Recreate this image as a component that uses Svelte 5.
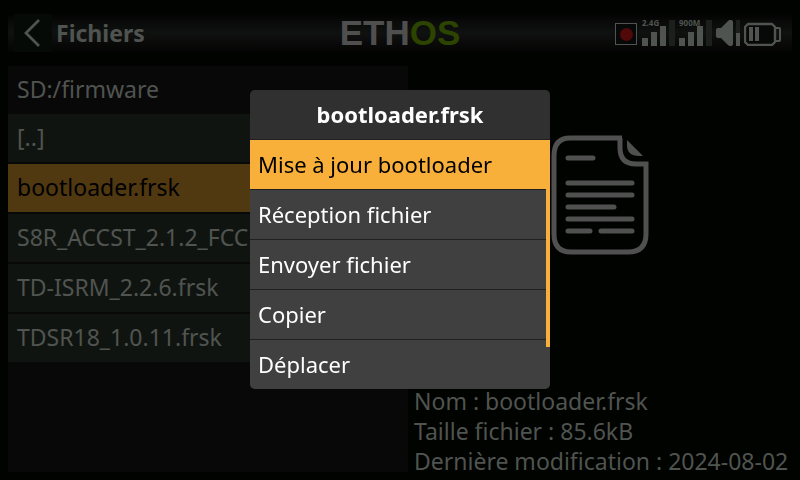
<script>
  const files = ['[..]', 'bootloader.frsk', 'S8R_ACCST_2.1.2_FCC', 'TD-ISRM_2.2.6.frsk', 'TDSR18_1.0.11.frsk'];
  const actions = ['Mise à jour bootloader', 'Réception fichier', 'Envoyer fichier', 'Copier', 'Déplacer'];
  const radios = ['2.4G', '900M'];
  let selectedFile = $state(1);
  let selectedAction = $state(0);
</script>

<div class="page">
  <header>
    <div class="lead">
      <button class="back" aria-label="Retour">
        <svg width="38" height="38" viewBox="0 0 38 38"><path d="M25 6 12 19 25 32" fill="none" stroke="currentColor" stroke-width="2.8" /></svg>
      </button>
      <h1>Fichiers</h1>
    </div>
    <div class="logo">ETH<span>OS</span></div>
    <div class="status">
      <svg width="23" height="26" viewBox="0 0 23 26">
        <rect x="0.5" y="3.5" width="21" height="21" fill="#060907" stroke="#505450" />
        <circle cx="11.5" cy="14.5" r="6.5" fill="#500808" />
      </svg>
      {#each radios as radio}
        <svg class="signal" width="33" height="26" viewBox="0 0 33 26">
          <rect x="0" y="18" width="6" height="8" />
          <rect x="9" y="12" width="6" height="14" />
          <rect x="18" y="6" width="6" height="20" />
          <rect x="27" y="0" width="6" height="26" fill="#1b201d" />
          <text x="0" y="6">{radio}</text>
        </svg>
      {/each}
      <svg width="24" height="26" viewBox="0 0 24 26">
        <path d="M2 8H5V18H2Q0 18 0 16V10Q0 8 2 8ZM5 8 12 1Q13 0 14 0H15Q17 0 17 2V24Q17 26 15 26H14Q13 26 12 25L5 18Z" />
        <rect x="20" y="0" width="4" height="13" fill="#1b201d" />
        <rect x="20" y="13" width="4" height="13" />
      </svg>
      <svg width="37" height="26" viewBox="0 0 37 26">
        <path d="M4 4H28L31 7V22L28 25H4L1 22V7Z" fill="#060907" stroke="#505450" stroke-width="2.4" stroke-linejoin="round" />
        <path d="M32 8H35Q36 8 36 9V20Q36 21 35 21H32" fill="none" stroke="#505450" stroke-width="2" />
        <rect x="5" y="7" width="4" height="14" />
        <rect x="11" y="7" width="4" height="14" />
      </svg>
    </div>
  </header>

  <main>
    <section class="browser" aria-label="Fichiers">
      <p class="path">SD:/firmware</p>
      <div class="files">
        {#each files as file, i}
          <button class:selected={i === selectedFile} onclick={() => (selectedFile = i)}>{file}</button>
        {/each}
      </div>
    </section>
    <section class="details" aria-label="Détails">
      <div class="preview">
        <svg class="document" width="98" height="120" viewBox="0 0 98 120">
          <path d="M71 3H19Q3 3 3 21V99Q3 117 20 117H77Q95 117 95 99V29H85Q69 29 69 13V3" stroke-width="5" />
          <path class="fold" d="M76 5 92 21H88Q76 21 76 10Z" />
          <path d="M17 23H42M17 48H81M17 60H81M17 72H63M17 84H81M17 96H39M50 96H81" stroke-width="5" stroke-linecap="round" />
        </svg>
      </div>
      <div class="info">
        <p>Nom : bootloader.frsk</p>
        <p>Taille fichier : 85.6kB</p>
        <p>Dernière modification : 2024-08-02</p>
      </div>
    </section>
  </main>

  <div class="overlay">
    <div class="menu" role="dialog" aria-labelledby="menu-title">
      <h2 id="menu-title">bootloader.frsk</h2>
      {#each actions as action, i}
        <button class:selected={i === selectedAction} onclick={() => (selectedAction = i)}>{action}</button>
      {/each}
      <span class="thumb"></span>
    </div>
  </div>
</div>

<style>
  :global(body) {
    margin: 0;
    background: #000300;
  }
  .page {
    box-sizing: border-box;
    min-height: 100vh;
    display: flex;
    flex-direction: column;
    gap: 14px;
    padding: 14px 8px 4px;
    font: 23px/30px "Noto Sans", sans-serif;
    font-variant-ligatures: none;
    color: #505450;
  }
  button {
    font: inherit;
    font-variant-ligatures: none;
    color: inherit;
    border: 0;
    margin: 0;
    cursor: pointer;
  }
  h1, h2, p {
    margin: 0;
  }
  svg {
    display: block;
    fill: #505450;
  }
  header {
    display: grid;
    grid-template-columns: 1fr auto 1fr;
    align-items: center;
    height: 38px;
    background: linear-gradient(#030202, #090a09 20%, #0f1210 50%, #0b0a0a 75%, #030403);
  }
  .lead {
    display: flex;
    align-items: center;
    gap: 4px;
    padding-left: 6px;
  }
  .back {
    padding: 0;
    background: #060a07;
  }
  .back svg {
    fill: none;
  }
  h1 {
    font-size: 23px;
    line-height: 38px;
  }
  .logo {
    font: bold 35px/38px "Liberation Sans", sans-serif;
    color: #4f4f4f;
  }
  .logo span {
    color: #2c4400;
  }
  .status {
    display: flex;
    justify-content: flex-end;
    gap: 4px;
    padding-right: 11px;
  }
  .signal {
    overflow: visible;
  }
  .signal text {
    font: bold 8px "Noto Sans", sans-serif;
  }
  main {
    flex: 1;
    display: flex;
  }
  .browser {
    flex: 400;
    min-width: 0;
    margin-bottom: 4px;
    background: #080808;
  }
  .details {
    flex: 384;
    min-width: 0;
    display: flex;
    flex-direction: column;
  }
  .path {
    padding: 8px 9px 10px;
  }
  .files {
    display: flex;
    flex-direction: column;
    gap: 2px;
  }
  .files button {
    padding: 8px 9px 10px;
    background: #101410;
    text-align: left;
    white-space: nowrap;
    overflow: hidden;
  }
  .files .selected {
    background: #503810;
    color: #000;
  }
  .preview {
    flex: 1;
    display: flex;
    justify-content: center;
    padding-top: 69px;
  }
  .document {
    fill: none;
    stroke: #505050;
  }
  .fold {
    fill: #505050;
    stroke: none;
  }
  .info {
    padding-left: 6px;
    white-space: nowrap;
  }
  .overlay {
    position: fixed;
    inset: 0;
    display: flex;
    align-items: center;
    justify-content: center;
    padding-bottom: 1px;
  }
  .menu {
    position: relative;
    display: flex;
    flex-direction: column;
    gap: 1px;
    width: 300px;
    border-radius: 5px;
    overflow: hidden;
    background: #202020;
    color: #fff;
    font-size: 22px;
  }
  .menu h2 {
    padding: 9px 0 10px;
    background: #303030;
    font-size: 22px;
    text-align: center;
  }
  .menu button {
    padding: 9px 8px 10px;
    background: #404040;
    text-align: left;
  }
  .menu .selected {
    background: #f9b03a;
    color: #000;
  }
  .thumb {
    position: absolute;
    top: 99px;
    right: 0;
    width: 4px;
    height: 158px;
    background: #f9b03a;
  }
</style>
